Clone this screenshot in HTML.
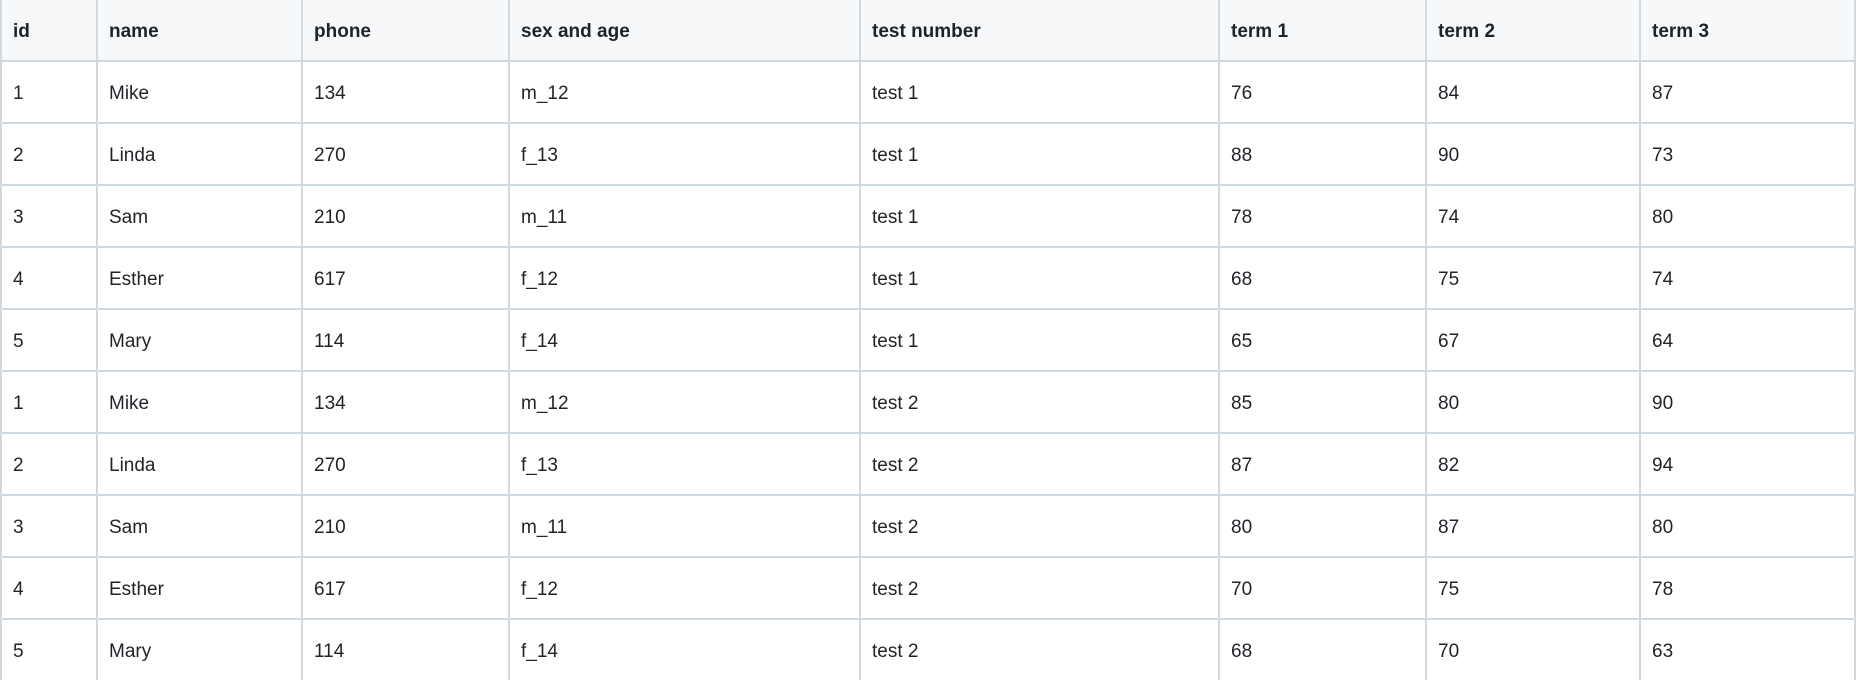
<!DOCTYPE html>
<html><head><meta charset="utf-8"><style>
html,body{margin:0;padding:0;background:#fff;width:1856px;height:680px;overflow:hidden}
table{border-collapse:separate;border-spacing:0;table-layout:fixed;width:1856px;font-family:"Liberation Sans",Arial,sans-serif;font-size:19px;color:#1f2328}
td,th{box-sizing:border-box;height:62px;border-left:2px solid #d1d9e0;border-bottom:2px solid #d1d9e0;padding:3px 0 0 11px;text-align:left;vertical-align:middle;white-space:nowrap}
td:last-child,th:last-child{border-right:2px solid #d1d9e0}
th{background:#f6f8fa;font-weight:bold;height:62px}
</style></head><body>
<table>
<colgroup><col style="width:96px"><col style="width:205px"><col style="width:207px"><col style="width:351px"><col style="width:359px"><col style="width:207px"><col style="width:214px"><col style="width:217px"></colgroup>
<tr><th>id</th><th>name</th><th>phone</th><th>sex and age</th><th>test number</th><th>term 1</th><th>term 2</th><th>term 3</th></tr>
<tr><td>1</td><td>Mike</td><td>134</td><td>m_12</td><td>test 1</td><td>76</td><td>84</td><td>87</td></tr>
<tr><td>2</td><td>Linda</td><td>270</td><td>f_13</td><td>test 1</td><td>88</td><td>90</td><td>73</td></tr>
<tr><td>3</td><td>Sam</td><td>210</td><td>m_11</td><td>test 1</td><td>78</td><td>74</td><td>80</td></tr>
<tr><td>4</td><td>Esther</td><td>617</td><td>f_12</td><td>test 1</td><td>68</td><td>75</td><td>74</td></tr>
<tr><td>5</td><td>Mary</td><td>114</td><td>f_14</td><td>test 1</td><td>65</td><td>67</td><td>64</td></tr>
<tr><td>1</td><td>Mike</td><td>134</td><td>m_12</td><td>test 2</td><td>85</td><td>80</td><td>90</td></tr>
<tr><td>2</td><td>Linda</td><td>270</td><td>f_13</td><td>test 2</td><td>87</td><td>82</td><td>94</td></tr>
<tr><td>3</td><td>Sam</td><td>210</td><td>m_11</td><td>test 2</td><td>80</td><td>87</td><td>80</td></tr>
<tr><td>4</td><td>Esther</td><td>617</td><td>f_12</td><td>test 2</td><td>70</td><td>75</td><td>78</td></tr>
<tr><td>5</td><td>Mary</td><td>114</td><td>f_14</td><td>test 2</td><td>68</td><td>70</td><td>63</td></tr>
</table>
</body></html>
